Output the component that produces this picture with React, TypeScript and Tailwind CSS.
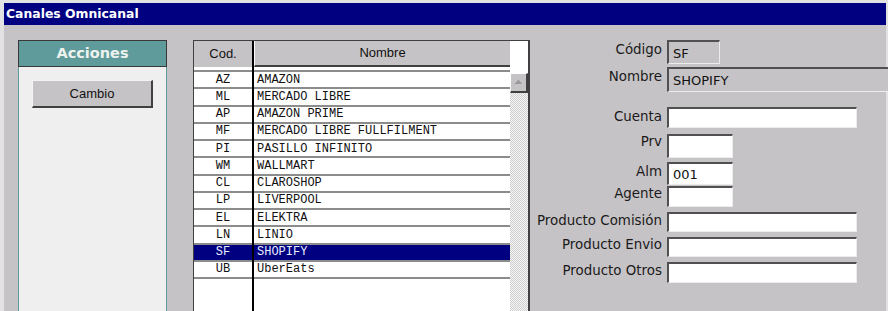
import React from "react";

const rows: [string, string][] = [
  ["AZ", "AMAZON"],
  ["ML", "MERCADO LIBRE"],
  ["AP", "AMAZON PRIME"],
  ["MF", "MERCADO LIBRE FULLFILMENT"],
  ["PI", "PASILLO INFINITO"],
  ["WM", "WALLMART"],
  ["CL", "CLAROSHOP"],
  ["LP", "LIVERPOOL"],
  ["EL", "ELEKTRA"],
  ["LN", "LINIO"],
  ["SF", "SHOPIFY"],
  ["UB", "UberEats"],
];

const sans = "font-['DejaVu_Sans',sans-serif]";

function Field({
  label,
  mt,
  h,
  w,
  pt,
  value,
  disabled,
}: {
  label: string;
  mt: string;
  h: string;
  w: string;
  pt: string;
  value?: string;
  disabled?: boolean;
}) {
  return (
    <div className={`flex gap-[5px] ${mt}`}>
      <div className={`w-[132px] shrink-0 whitespace-nowrap text-right text-[13.4px] leading-[16px] text-[#1a1a1a] ${pt}`}>{label}</div>
      <div
        className={`${w} ${h} shrink-0 border-t-2 border-l-2 border-t-[#505050] border-l-[#505050] border-b border-r border-b-[#ececec] border-r-[#ececec] ${
          disabled ? "bg-[#c6c3c6]" : "bg-white"
        } flex items-center pl-[4px] pt-[2px] text-[13px] text-[#111]`}
      >
        {value}
      </div>
    </div>
  );
}

export default function App() {
  return (
    <div className={`w-[888px] h-[311px] overflow-hidden bg-[#e2e2e2] pt-[3px] pl-[4px] pr-[2px] ${sans}`}>
      <div className="flex h-full flex-col bg-[#c6c3c6]">
        <div className="h-[22px] shrink-0 bg-[#000080] pl-[2px] text-[12.4px] font-bold leading-[22px] text-white">
          Canales Omnicanal
        </div>
        <div className="flex flex-1 pt-[15px]">
          {/* Left panel */}
          <div className="ml-[14px] flex w-[149px] shrink-0 flex-col">
            <div className="flex h-[27px] items-center justify-center border border-[#383838] bg-[#5f9b9b] text-[14.5px] font-bold text-[#eef2ee]">
              Acciones
            </div>
            <div className="flex-1 border-x border-[#5f9b9b] bg-[#efefef] pl-[13px] pt-[13px]">
              <div className="flex h-[28px] w-[121px] items-center justify-center border-t border-l border-t-[#f4f4f4] border-l-[#f4f4f4] border-b-2 border-r-2 border-b-[#404040] border-r-[#404040] bg-[#c6c3c6] font-['Liberation_Sans',sans-serif] text-[13px] text-[#111]">
                Cambio
              </div>
            </div>
          </div>

          {/* Table */}
          <div className="ml-[26px] flex w-[337px] shrink-0 border-t border-l border-[#404040] border-r-2 border-r-[#404040] bg-white">
            <div className="flex w-[60px] shrink-0 flex-col border-r-2 border-black">
              <div className="flex h-[26px] shrink-0 items-center justify-center bg-[#c6c3c6] font-['Liberation_Sans',sans-serif] text-[13px] text-[#111]">
                Cod.
              </div>
              <div className="h-[5px] shrink-0 border-b-2 border-[#8c8c8c]" />
              {rows.map(([c]) => (
                <div
                  key={c}
                  className={`flex h-[17.25px] shrink-0 items-center justify-center border-b-2 border-[#8c8c8c] font-['Liberation_Mono',monospace] text-[12px] ${
                    c === "SF" ? "bg-[#000080] text-[#e8ecff]" : "text-[#111]"
                  }`}
                >
                  {c}
                </div>
              ))}
              <div className="flex-1" />
            </div>
            <div className="flex w-[256px] shrink-0 flex-col">
              <div className="flex h-[26px] shrink-0 items-center justify-center border-l border-white border-b-2 border-b-[#404040] bg-[#c6c3c6] font-['Liberation_Sans',sans-serif] text-[13px] text-[#111]">
                Nombre
              </div>
              <div className="h-[5px] shrink-0 border-b-2 border-[#8c8c8c]" />
              {rows.map(([c, n]) => (
                <div
                  key={c}
                  className={`flex h-[17.25px] shrink-0 items-center whitespace-pre border-b-2 border-[#8c8c8c] pl-[3px] font-['Liberation_Mono',monospace] text-[12px] ${
                    c === "SF" ? "bg-[#000080] text-[#e8ecff]" : "text-[#111]"
                  }`}
                >
                  {n}
                </div>
              ))}
              <div className="flex-1" />
            </div>
            <div className="flex w-[18px] shrink-0 flex-col">
              <div className="h-[32px] shrink-0 bg-white" />
              <div className="flex h-[20px] shrink-0 items-center justify-center border-t border-l border-white border-b-2 border-r-2 border-b-[#404040] border-r-[#404040] bg-[#c6c3c6]">
                <svg width="11" height="7" viewBox="0 0 11 7">
                  <polygon points="6,1 10.5,6 1.5,6" fill="#f0f0f0" />
                  <polygon points="5.5,0.5 10,5.5 1,5.5" fill="#9a9a9a" />
                </svg>
              </div>
              <div className="flex-1 bg-[repeating-conic-gradient(#d0d0d0_0_25%,#f4f4f4_0_50%)] bg-[length:2px_2px]" />
            </div>
          </div>

          {/* Right form */}
          <div className="flex flex-1 flex-col">
            <Field label="Código" mt="mt-0" h="h-[24px]" w="w-[53px]" pt="pt-[2px]" value="SF" disabled />
            <Field label="Nombre" mt="mt-[3px]" h="h-[25px]" w="w-[240px]" pt="pt-[2px]" value="SHOPIFY" disabled />
            <Field label="Cuenta" mt="mt-[15px]" h="h-[21px]" w="w-[190px]" pt="pt-[2px]" />
            <Field label="Prv" mt="mt-[6px]" h="h-[24px]" w="w-[66px]" pt="pt-0" />
            <Field label="Alm" mt="mt-[4px]" h="h-[23px]" w="w-[66px]" pt="pt-[2px]" value="001" />
            <Field label="Agente" mt="mt-[1px]" h="h-[21px]" w="w-[66px]" pt="pt-0" />
            <Field label="Producto Comisión" mt="mt-[5px]" h="h-[20px]" w="w-[190px]" pt="pt-[1px]" />
            <Field label="Producto Envio" mt="mt-[5px]" h="h-[20px]" w="w-[190px]" pt="pt-0" />
            <Field label="Producto Otros" mt="mt-[5px]" h="h-[21px]" w="w-[190px]" pt="pt-[1px]" />
          </div>
        </div>
      </div>
    </div>
  );
}
